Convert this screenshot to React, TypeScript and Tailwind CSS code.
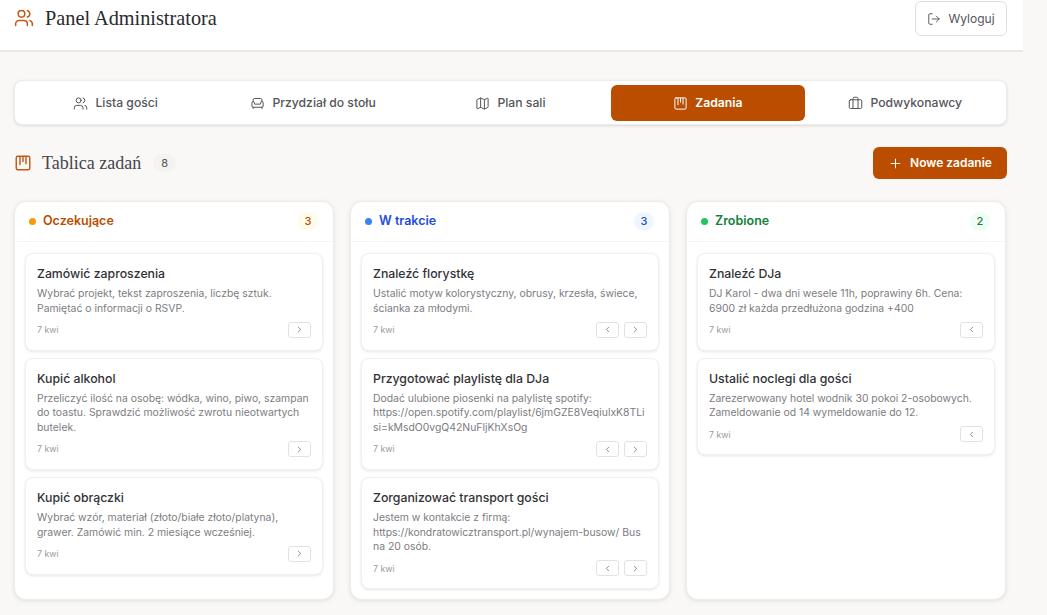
import { Armchair, Briefcase, ChevronLeft, ChevronRight, LogOut, Map, Plus, Users } from "lucide-react"

interface Task {
  title: string
  lines: string[]
  back?: boolean
  next?: boolean
}

const pending: Task[] = [
  {
    title: "Zamówić zaproszenia",
    lines: ["Wybrać projekt, tekst zaproszenia, liczbę sztuk.", "Pamiętać o informacji o RSVP."],
    next: true,
  },
  {
    title: "Kupić alkohol",
    lines: [
      "Przeliczyć ilość na osobę: wódka, wino, piwo, szampan",
      "do toastu. Sprawdzić możliwość zwrotu nieotwartych",
      "butelek.",
    ],
    next: true,
  },
  {
    title: "Kupić obrączki",
    lines: ["Wybrać wzór, materiał (złoto/białe złoto/platyna),", "grawer. Zamówić min. 2 miesiące wcześniej."],
    next: true,
  },
]

const inProgress: Task[] = [
  {
    title: "Znaleźć florystkę",
    lines: ["Ustalić motyw kolorystyczny, obrusy, krzesła, świece,", "ścianka za młodymi."],
    back: true,
    next: true,
  },
  {
    title: "Przygotować playlistę dla DJa",
    lines: [
      "Dodać ulubione piosenki na palylistę spotify:",
      "https://open.spotify.com/playlist/6jmGZE8VeqiulxK8TLi",
      "si=kMsdO0vgQ42NuFljKhXsOg",
    ],
    back: true,
    next: true,
  },
  {
    title: "Zorganizować transport gości",
    lines: [
      "Jestem w kontakcie z firmą:",
      "https://kondratowicztransport.pl/wynajem-busow/ Bus",
      "na 20 osób.",
    ],
    back: true,
    next: true,
  },
]

const done: Task[] = [
  {
    title: "Znaleźć DJa",
    lines: ["DJ Karol - dwa dni wesele 11h, poprawiny 6h. Cena:", "6900 zł każda przedłużona godzina +400"],
    back: true,
  },
  {
    title: "Ustalić noclegi dla gości",
    lines: ["Zarezerwowany hotel wodnik 30 pokoi 2-osobowych.", "Zameldowanie od 14 wymeldowanie do 12."],
    back: true,
  },
]

function BoardIcon({ className, strokeWidth = 2 }: { className?: string; strokeWidth?: number }) {
  return (
    <svg
      viewBox="0 0 24 24"
      fill="none"
      stroke="currentColor"
      strokeWidth={strokeWidth}
      strokeLinecap="round"
      strokeLinejoin="round"
      className={className}
    >
      <rect x="3" y="3" width="18" height="18" rx="2" />
      <path d="M8 4v10" />
      <path d="M12 4v6" />
      <path d="M16 4v9" />
    </svg>
  )
}

function MoveButton({ children }: { children: React.ReactNode }) {
  return (
    <button className="flex h-[16px] w-[23px] items-center justify-center rounded-[3px] border border-[#e2e2e0] bg-white text-[#666]">
      {children}
    </button>
  )
}

function TaskCard({ task }: { task: Task }) {
  return (
    <div className="rounded-lg border border-[#f2f1ef] bg-white px-[11px] pb-[11.4px] pt-[12px] shadow-[0_1px_3px_rgba(0,0,0,0.1)]">
      <h4 className="text-[12.3px] font-medium leading-[16px] text-[#333336]">{task.title}</h4>
      <p className="mt-[5px] text-[10.4px] leading-[14.6px] text-[#7c7c7f]">
        {task.lines.map((line) => (
          <span key={line} className="block whitespace-nowrap">
            {line}
          </span>
        ))}
      </p>
      <div className="mt-[5px] flex h-[17px] items-center justify-between">
        <span className="text-[8.8px] text-[#9a9a9c]">7 kwi</span>
        <div className="flex gap-[5px]">
          {task.back && (
            <MoveButton>
              <ChevronLeft className="h-[9px] w-[9px]" />
            </MoveButton>
          )}
          {task.next && (
            <MoveButton>
              <ChevronRight className="h-[9px] w-[9px]" />
            </MoveButton>
          )}
        </div>
      </div>
    </div>
  )
}

function Column({
  title,
  count,
  tasks,
  dot,
  text,
  badge,
}: {
  title: string
  count: number
  tasks: Task[]
  dot: string
  text: string
  badge: string
}) {
  return (
    <div className="flex h-[399px] flex-col rounded-xl border border-[#ececea] bg-white shadow-[0_1px_4px_rgba(0,0,0,0.1)]">
      <div className="flex h-[40px] shrink-0 items-center justify-between border-b border-[#f3f3f1] pl-[14px] pr-[15px]">
        <div className="flex items-center gap-[7px]">
          <span className={`h-[7px] w-[7px] rounded-full ${dot}`} />
          <span className={`text-[12.5px] font-semibold ${text}`}>{title}</span>
        </div>
        <span className={`flex h-[19px] w-[20px] items-center justify-center rounded-full text-[11px] font-medium ${badge}`}>
          {count}
        </span>
      </div>
      <div className="flex flex-col gap-[7.2px] px-[10px] pt-[11px]">
        {tasks.map((task) => (
          <TaskCard key={task.title} task={task} />
        ))}
      </div>
    </div>
  )
}

const tabs = [
  { label: "Lista gości", icon: Users },
  { label: "Przydział do stołu", icon: Armchair },
  { label: "Plan sali", icon: Map },
  { label: "Zadania", icon: BoardIcon, active: true },
  { label: "Podwykonawcy", icon: Briefcase },
]

export default function App() {
  return (
    <div className="h-[615px] overflow-hidden bg-[#f9f8f6] font-['Inter',sans-serif]">
      <div className="w-[1023px]">
        <header className="flex h-[52px] items-start justify-between border-b-2 border-[#e8e8e6] bg-white pl-[14px] pr-[16px] pt-[1px]">
          <div className="flex h-[34px] items-center gap-[11px]">
            <Users className="h-[20px] w-[20px] text-[#bf5a15]" strokeWidth={1.8} />
            <h1 className="font-['Liberation_Serif',serif] text-[20.3px] leading-none text-[#2a2a2e]">
              Panel Administratora
            </h1>
          </div>
          <button className="flex h-[35px] w-[92px] items-center justify-center gap-[7px] rounded-md border border-[#dededc] bg-white text-[12px] text-[#55555a]">
            <LogOut className="h-[14px] w-[14px]" strokeWidth={1.6} />
            Wyloguj
          </button>
        </header>

        <main className="pl-[14px] pr-[16px] pt-[28px]">
          <nav className="grid h-[45px] grid-cols-5 gap-[4px] rounded-lg border border-[#ececea] bg-white px-[4px] pb-[3px] pt-[4px] shadow-[0_1px_3px_rgba(0,0,0,0.12)]">
            {tabs.map((tab) => (
              <div
                key={tab.label}
                className={
                  tab.active
                    ? "flex items-center justify-center gap-[7px] rounded-md bg-[#bb4d00] text-[12.2px] font-semibold text-white"
                    : "flex items-center justify-center gap-[7px] rounded-md text-[12.2px] font-medium text-[#55555a]"
                }
              >
                <tab.icon className="h-[15px] w-[15px]" strokeWidth={1.6} />
                {tab.label}
              </div>
            ))}
          </nav>

          <div className="mt-[22px] flex h-[32px] items-center justify-between">
            <div className="flex items-center">
              <BoardIcon className="h-[18px] w-[18px] text-[#bf5a15]" strokeWidth={1.9} />
              <h2 className="ml-[10px] font-['Liberation_Serif',serif] text-[18px] leading-none text-[#45454a]">
                Tablica zadań
              </h2>
              <span className="ml-[12px] flex h-[18px] w-[23px] items-center justify-center rounded-full bg-[#f3f3f1] text-[11px] text-[#55555a]">
                8
              </span>
            </div>
            <button className="flex h-[32px] w-[134px] items-center justify-center gap-[7px] rounded-md bg-[#bb4d00] text-[12px] font-semibold text-white">
              <Plus className="h-[15px] w-[15px]" strokeWidth={1.6} />
              Nowe zadanie
            </button>
          </div>

          <div className="mt-[22px] grid grid-cols-[320px_320px_320px] gap-[16px]">
            <Column
              title="Oczekujące"
              count={3}
              tasks={pending}
              dot="bg-[#f59a0b]"
              text="text-[#bb4d00]"
              badge="bg-[#fffbeb] text-[#bb4d00]"
            />
            <Column
              title="W trakcie"
              count={3}
              tasks={inProgress}
              dot="bg-[#3b82f6]"
              text="text-[#1d4ed8]"
              badge="bg-[#eff6ff] text-[#1d4ed8]"
            />
            <Column
              title="Zrobione"
              count={2}
              tasks={done}
              dot="bg-[#22c55e]"
              text="text-[#15803d]"
              badge="bg-[#f0fdf4] text-[#15803d]"
            />
          </div>
        </main>
      </div>
    </div>
  )
}
